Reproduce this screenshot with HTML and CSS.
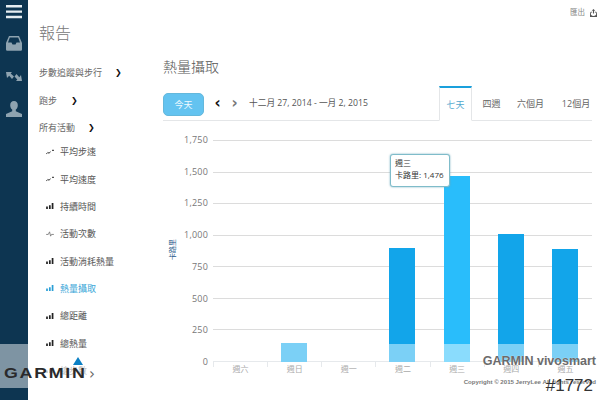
FILE: index.html
```html
<!DOCTYPE html>
<html lang="zh-Hant">
<head>
<meta charset="utf-8">
<title>報告</title>
<link rel="stylesheet" href="styles.css">
</head>
<body>
<div class="app">
  <nav class="rail">
    <svg class="rail-icon burger" width="16" height="14" viewBox="0 0 16 14"><path d="M0 0h16v2.400H0zM0 5.400h16v2.400H0zM0 10.800h16v2.400H0z" fill="#e6edf1"/></svg>
    <svg class="rail-icon inbox" width="16" height="15" viewBox="0 0 16 15"><path d="M3 0h10l3 7v6.500a1.200 1.200 0 0 1-1.200 1.200H1.200A1.200 1.200 0 0 1 0 13.500V7zM3.800 1.500 2 6.500h3.500l1 2h3l1-2H14l-1.800-5z" fill="#8ea3b0" fill-rule="evenodd"/></svg>
    <svg class="rail-icon arrows" width="16" height="9" viewBox="0 0 16 9"><path d="M0 0h6L4.700 1.500 8 4.500 6 7 3.200 3.800 1 6zM16 9h-6l1.300-1.500L8.500 4.500l2-2.500 2.800 3.200L15 3z" fill="#8ea3b0"/></svg>
    <svg class="rail-icon user" width="16" height="16" viewBox="0 0 16 16"><path d="M8 0c2.500 0 3.800 1.800 3.800 4.200 0 2-1 3.600-2 4.400v1.700L16 13v3H0v-3l6.200-2.700V8.600c-1-.8-2-2.400-2-4.400C4.200 1.800 5.500 0 8 0z" fill="#8ea3b0"/></svg>
  </nav>

  <aside class="menu">
    <h1 class="menu-title">報告</h1>
    <ul class="menu-list">
      <li class="menu-row top-row gap-a">步數追蹤與步行<span class="chev">❯</span></li>
      <li class="menu-row top-row gap-b">跑步<span class="chev">❯</span></li>
      <li class="menu-row top-row gap-c">所有活動<span class="chev">❯</span></li>
      <li class="menu-row sub-row">
        <svg class="mi" width="8" height="6" viewBox="0 0 9 7"><path d="M0 6l2-2 1.500 1L5 3" fill="none" stroke="#333" stroke-width="1.100"/><path d="M7 1h2v1.200H7z" fill="#333"/></svg>平均步速</li>
      <li class="menu-row sub-row">
        <svg class="mi" width="8" height="6" viewBox="0 0 9 7"><path d="M0 6l2-2 1.500 1L5 3" fill="none" stroke="#333" stroke-width="1.100"/><path d="M7 1h2v1.200H7z" fill="#333"/></svg>平均速度</li>
      <li class="menu-row sub-row">
        <svg class="mi" width="8" height="6" viewBox="0 0 9 7"><path d="M0 4h2v3H0zM3.300 2.500h2V7h-2zM6.500 0h2v7h-2z" fill="#222"/></svg>持續時間</li>
      <li class="menu-row sub-row">
        <svg class="mi" width="8" height="6" viewBox="0 0 9 7"><path d="M0 4h2.500L4 1l1.200 5 1-2H9" fill="none" stroke="#777" stroke-width="1"/></svg>活動次數</li>
      <li class="menu-row sub-row">
        <svg class="mi" width="8" height="6" viewBox="0 0 9 7"><path d="M0 4h2v3H0zM3.300 2.500h2V7h-2zM6.500 0h2v7h-2z" fill="#222"/></svg>活動消耗熱量</li>
      <li class="menu-row sub-row active">
        <svg class="mi" width="8" height="6" viewBox="0 0 9 7"><path d="M0 4h2v3H0zM3.300 2.500h2V7h-2zM6.500 0h2v7h-2z" fill="#2a9fd6"/></svg>熱量攝取</li>
      <li class="menu-row sub-row">
        <svg class="mi" width="8" height="6" viewBox="0 0 9 7"><path d="M0 4h2v3H0zM3.300 2.500h2V7h-2zM6.500 0h2v7h-2z" fill="#222"/></svg>總距離</li>
      <li class="menu-row sub-row">
        <svg class="mi" width="8" height="6" viewBox="0 0 9 7"><path d="M0 4h2v3H0zM3.300 2.500h2V7h-2zM6.500 0h2v7h-2z" fill="#222"/></svg>總熱量</li>
      <li class="menu-row sub-row faint">
        <svg class="mi" width="8" height="6" viewBox="0 0 9 7"><path d="M0 4h2v3H0zM3.300 2.500h2V7h-2zM6.500 0h2v7h-2z" fill="#ccc"/></svg>總步數</li>
    </ul>
  </aside>

  <main class="main">
    <div class="export">匯出
      <svg width="7" height="8" viewBox="0 0 8 9"><path d="M4 0 6 2H4.600v3H3.400V2H2zM1 3h1.500v1H1.600C1 4.500 1 5 1 6c0 1 .8 1.800 3 1.800S7 7 7 6c0-1 0-1.500-.6-2H5.500V3H7c.7.600 1 1.700 1 3v3H0V6c0-1.300.3-2.400 1-3z" fill="#555"/></svg>
    </div>
    <h2 class="page-title">熱量攝取</h2>
    <div class="toolbar">
      <button class="today">今天</button>
      <span class="nav-arrow dark">‹</span>
      <span class="nav-arrow">›</span>
      <span class="range">十二月 27, 2014 - 一月 2, 2015</span>
      <div class="tabs">
        <span class="tab selected">七天</span>
        <span class="tab">四週</span>
        <span class="tab">六個月</span>
        <span class="tab twelve">12個月</span>
      </div>
    </div>

    <section class="chart">
      <div class="y-title">卡路里</div>
      <div class="y-axis">
        <span>1,750</span><span>1,500</span><span>1,250</span><span>1,000</span><span>750</span><span>500</span><span>250</span><span>0</span>
      </div>
      <div class="plot-wrap">
        <div class="plot">
          <div class="grid"><i></i><i></i><i></i><i></i><i></i><i></i><i></i><i class="base"></i></div>
          <div class="bars">
            <div class="col"></div>
            <div class="col"><div class="bar only" style="height:19px"></div></div>
            <div class="col"></div>
            <div class="col"><div class="bar" style="height:114px"><div class="bar-low"></div></div></div>
            <div class="col"><div class="bar hot" style="height:186px"><div class="bar-low"></div></div></div>
            <div class="col"><div class="bar" style="height:128px"><div class="bar-low"></div></div></div>
            <div class="col"><div class="bar" style="height:113px"><div class="bar-low"></div></div></div>
          </div>
          <div class="tooltip"><div>週三</div><div>卡路里: 1,476</div></div>
        </div>
        <div class="x-axis"><span>週六</span><span>週日</span><span>週一</span><span>週二</span><span>週三</span><span>週四</span><span>週五</span></div>
      </div>
    </section>
  </main>
</div>

<div class="logo-band"></div>
<div class="logo"><span class="logo-tri"></span><span class="logo-word">GARMIN</span><span class="logo-chev">›</span></div>
<div class="stamp">
  <div class="stamp-name">GARMIN vivosmart</div>
  <div class="stamp-copy">Copyright © 2015 JerryLee All rights reserved</div>
  <div class="stamp-num">#1772</div>
</div>
</body>
</html>
```
FILE: styles.css
```css
* { box-sizing: border-box; }
html, body { margin: 0; padding: 0; width: 600px; height: 400px; overflow: hidden; background: #fff; }
body { font-family: "Open Sans", "Noto Sans CJK TC", sans-serif; color: #555; position: relative; }

.app { display: flex; height: 400px; }

.rail { width: 28px; flex: none; background: #0d3551; display: flex; flex-direction: column; align-items: center; padding-top: 5px; }
.rail-icon { display: block; }
.inbox { margin-top: 17px; }
.arrows { margin-top: 21px; }
.user { margin-top: 20px; }

.menu { width: 135px; flex: none; padding: 24px 0 0 11px; overflow: hidden; }
.menu-title { margin: 0; font-size: 16px; font-weight: 300; line-height: 18px; color: #777; }
.menu-list { list-style: none; margin: 17px 0 0; padding: 0; }
.menu-row { height: 27.35px; font-size: 9px; line-height: 11px; display: flex; align-items: center; color: #666; white-space: nowrap; }
.gap-c { margin-bottom: -3px; }
.sub-row { padding-left: 7px; color: #555; }
.active { color: #3aa6d8; }
.faint { color: #bbb; }
.mi { margin-right: 6px; flex: none; }
.chev { font-size: 8px; color: #111; font-family: "DejaVu Sans", sans-serif; }
.gap-a .chev { margin-left: 16px; }
.gap-b .chev { margin-left: 17px; }
.gap-c .chev { margin-left: 16px; }
.gap-a .chev, .gap-b .chev, .gap-c .chev { position: relative; left: -3px; }

.main { flex: 1; min-width: 0; padding: 0 8px 0 0; position: relative; }
.export { position: absolute; top: 7px; right: 3px; font-size: 7.500px; line-height: 11px; color: #888; display: flex; gap: 5px; align-items: center; }
.page-title { margin: 0; padding-top: 57px; font-size: 14px; line-height: 19px; font-weight: 300; color: #555; }

.toolbar { margin-top: 10px; height: 35px; border-bottom: 1px solid #e4e6e8; display: flex; align-items: flex-start; position: relative; }
.today { width: 41px; height: 23px; margin-top: 7px; border: 1px solid #64b8dc; border-radius: 5px; background: #63c3f0; color: #eef9ff; font: 9px/1 "Open Sans", "Noto Sans CJK TC", sans-serif; padding: 0; }
.nav-arrow { margin-top: 7px; width: 17px; text-align: center; font: 700 15px/20px "DejaVu Sans", sans-serif; color: #777; }
.nav-arrow.dark { margin-left: 5px; color: #111; }
.range { margin-left: 6px; margin-top: 10px; font-size: 8.700px; line-height: 15px; color: #555; white-space: nowrap; }
.tabs { position: absolute; left: 276px; top: 0; height: 35px; display: flex; font-size: 9px; color: #666; }
.tab { width: 39px; line-height: 36px; text-align: center; white-space: nowrap; }
.tab.selected { width: 33px; border: 1px solid #e4e6e8; border-top: 2px solid #1aa0dc; border-bottom: 1px solid #fff; color: #52a9cf; line-height: 33px; }
.tab.twelve { width: 52px; }

.chart { display: flex; margin-top: 19px; height: 245px; position: relative; }
.y-title { position: absolute; left: 0; top: 105px; width: 20px; text-align: center; font-size: 7px; transform: rotate(-90deg); color: #2a5a8a; line-height: 10px; white-space: nowrap; }
.y-axis { width: 46px; flex: none; height: 222px; display: flex; flex-direction: column; justify-content: space-between; align-items: flex-end; padding-right: 1px; font-size: 9px; letter-spacing: .2px; color: #777; }
.y-axis span { height: 0; line-height: 0; display: block; }
.plot-wrap { margin-left: 4px; width: 379px; }
.plot { position: relative; height: 222px; }
.grid { height: 222px; display: flex; flex-direction: column; justify-content: space-between; }
.grid i { display: block; height: 1px; background: #dcdcdc; }
.grid i.base { background: #e6e9ec; }
.bars { position: absolute; inset: 0; display: flex; align-items: flex-end; }
.col { flex: 1; display: flex; justify-content: center; align-items: flex-end; height: 100%; }
.bar { width: 26px; background: #12a5ea; position: relative; }
.bar.hot { background: #29bdfb; }
.bar-low { position: absolute; left: 0; right: 0; bottom: 0; height: 18px; background: #7bd0f6; }
.hot .bar-low { background: #8adcfd; }
.bar.only { background: #7bd0f6; }
.tooltip { position: absolute; left: 177px; top: 14px; width: 60px; height: 33px; background: #fff; border: 1px solid #7fbcca; border-radius: 3px; box-shadow: 0 0 2px #6aa9bb; padding: 2px 4px; font-size: 8px; line-height: 12px; color: #333; white-space: nowrap; }
.x-axis { display: flex; height: 16px; }
.x-axis span { flex: 1; text-align: center; font-size: 8px; line-height: 13px; color: #aaa; border-left: 1px solid #e6e9ec; height: 5px; overflow: visible; }

.logo-band { position: absolute; left: 0; top: 344px; width: 28px; height: 44px; background: rgba(255, 255, 255, .47); }
.logo { position: absolute; left: 4px; top: 355px; width: 94px; height: 28px; }
.logo-tri { position: absolute; left: 69px; top: 2px; width: 0; height: 0; border-left: 5px solid transparent; border-right: 5px solid transparent; border-bottom: 8px solid #0a7fc4; }
.logo-word { position: absolute; left: 0; top: 9px; font: 700 15.500px/18px "Liberation Sans", sans-serif; letter-spacing: 1.500px; color: #2a2a2c; transform: scaleX(1.15); transform-origin: left center; }
.logo-chev { position: absolute; left: 85px; top: 10px; font: 400 15px/18px "DejaVu Sans", sans-serif; color: #666; }

.stamp { position: absolute; right: 0; top: 352px; width: 140px; height: 48px; color: #555; }
.stamp-name { position: absolute; right: 4px; top: 2px; font: 700 12.500px/15px "Liberation Sans", sans-serif; color: #6b6b6b; text-shadow: 0 0 1px #fff; white-space: nowrap; }
.stamp-copy { position: absolute; right: 4px; top: 26px; font: 700 6.100px/8px "Liberation Sans", sans-serif; color: #7a7a7a; white-space: nowrap; }
.stamp-num { position: absolute; right: 7px; top: 24px; font: 400 17px/20px "Liberation Sans", sans-serif; color: #333; }
```
